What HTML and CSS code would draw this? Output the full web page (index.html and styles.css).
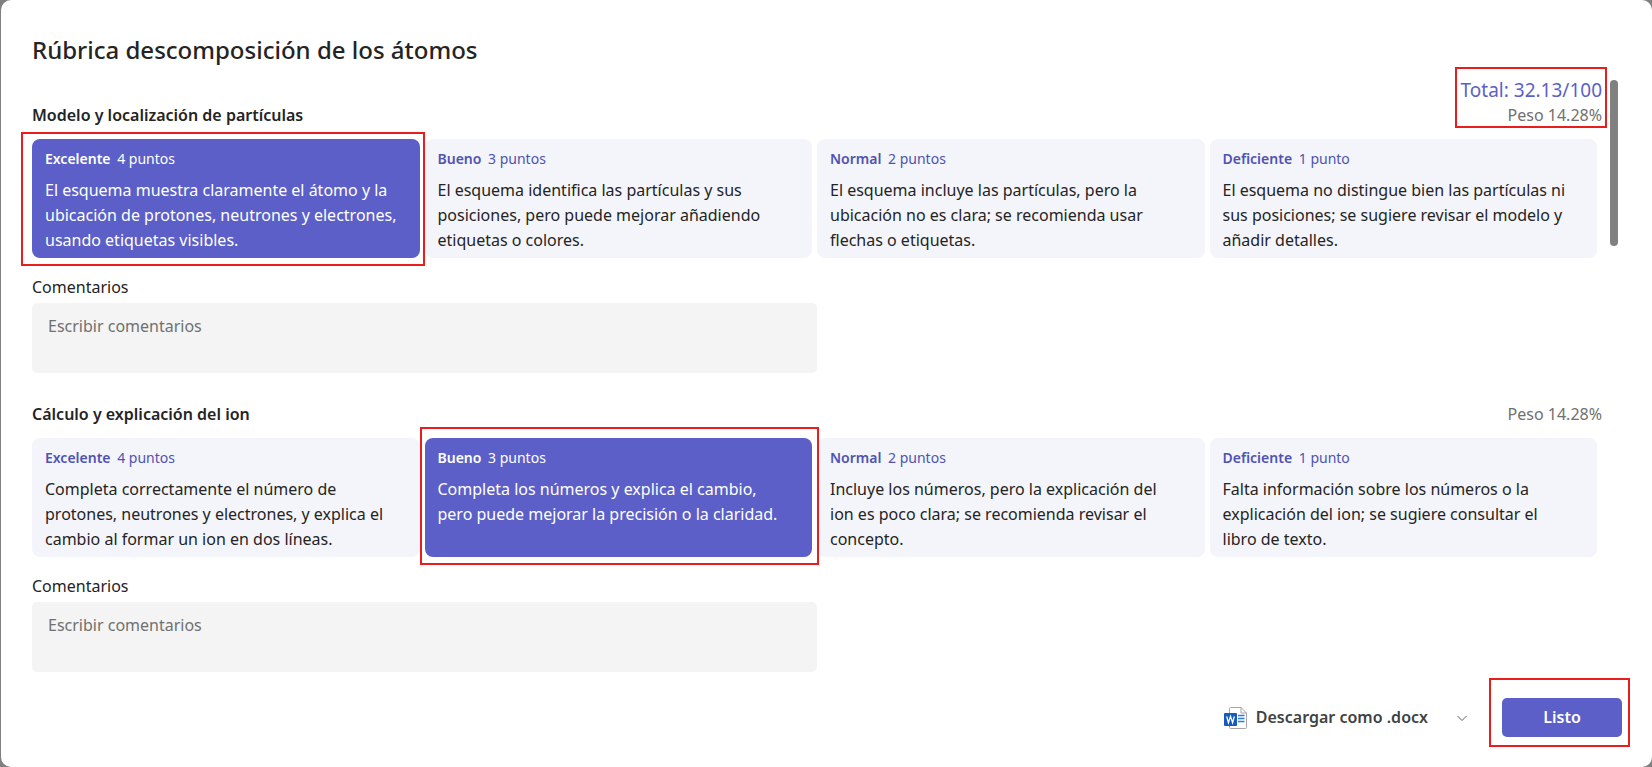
FILE: index.html
```html
<!DOCTYPE html>
<html lang="es">
<head>
  <meta charset="UTF-8">
  <title>Rúbrica descomposición de los átomos</title>
  <link rel="stylesheet" href="styles.css">
</head>
<body>
<div class="dialog">
  <h1>Rúbrica descomposición de los átomos</h1>
  <div class="scroller">
    <div class="rubric">
      <div class="total">Total: 32.13/100</div>

      <section class="criterion">
        <div class="criterion-head">
          <h2>Modelo y localización de partículas</h2>
          <span class="weight">Peso 14.28%</span>
        </div>
        <div class="levels">
          <button type="button" class="level selected" aria-pressed="true">
            <span class="level-name"><b>Excelente</b> 4 puntos</span>
            <span class="level-text">El esquema muestra claramente el átomo y la ubicación de protones, neutrones y electrones, usando etiquetas visibles.</span>
            <span class="mark mark-first"></span>
          </button>
          <button type="button" class="level" aria-pressed="false">
            <span class="level-name"><b>Bueno</b> 3 puntos</span>
            <span class="level-text">El esquema identifica las partículas y sus posiciones, pero puede mejorar añadiendo etiquetas o colores.</span>
          </button>
          <button type="button" class="level" aria-pressed="false">
            <span class="level-name"><b>Normal</b> 2 puntos</span>
            <span class="level-text">El esquema incluye las partículas, pero la ubicación no es clara; se recomienda usar flechas o etiquetas.</span>
          </button>
          <button type="button" class="level" aria-pressed="false">
            <span class="level-name"><b>Deficiente</b> 1 punto</span>
            <span class="level-text">El esquema no distingue bien las partículas ni sus posiciones; se sugiere revisar el modelo y añadir detalles.</span>
          </button>
        </div>
        <label for="comment1">Comentarios</label>
        <textarea id="comment1" class="comment" placeholder="Escribir comentarios"></textarea>
        <span class="mark mark-total"></span>
      </section>

      <section class="criterion">
        <div class="criterion-head">
          <h2>Cálculo y explicación del ion</h2>
          <span class="weight">Peso 14.28%</span>
        </div>
        <div class="levels">
          <button type="button" class="level" aria-pressed="false">
            <span class="level-name"><b>Excelente</b> 4 puntos</span>
            <span class="level-text">Completa correctamente el número de protones, neutrones y electrones, y explica el cambio al formar un ion en dos líneas.</span>
          </button>
          <button type="button" class="level selected" aria-pressed="true">
            <span class="level-name"><b>Bueno</b> 3 puntos</span>
            <span class="level-text">Completa los números y explica el cambio,<br>pero puede mejorar la precisión o la claridad.</span>
            <span class="mark mark-second"></span>
          </button>
          <button type="button" class="level" aria-pressed="false">
            <span class="level-name"><b>Normal</b> 2 puntos</span>
            <span class="level-text">Incluye los números, pero la explicación del<br>ion es poco clara; se recomienda revisar el concepto.</span>
          </button>
          <button type="button" class="level" aria-pressed="false">
            <span class="level-name"><b>Deficiente</b> 1 punto</span>
            <span class="level-text">Falta información sobre los números o la explicación del ion; se sugiere consultar el<br>libro de texto.</span>
          </button>
        </div>
        <label for="comment2">Comentarios</label>
        <textarea id="comment2" class="comment" placeholder="Escribir comentarios"></textarea>
      </section>
    </div>
    <div class="scroll-thumb"></div>
  </div>

  <div class="footer">
    <button type="button" class="download">
      <svg class="word-icon" viewBox="0 0 24 24" width="24" height="24">
        <path d="M6.500 1.500h10.500l5.500 5.500v14.500a1 1 0 0 1-1 1h-15a1 1 0 0 1-1-1v-19a1 1 0 0 1 1-1z" fill="#fff" stroke="#a6a6a6"/>
        <path d="M17 1.500v5.500h5.500" fill="none" stroke="#a6a6a6"/>
        <path d="M14 9.500h6.500M14 12.500h6.500M14 15.500h6.500" stroke="#2b7cd3" stroke-width="1.500"/>
        <rect x="0" y="7" width="13" height="13" rx="1" fill="#185abd"/>
        <path d="M2.700 10.300l1.700 6.400 2.100-6.400 2.100 6.400 1.700-6.400" fill="none" stroke="#fff" stroke-width="1.300"/>
      </svg>
      Descargar como .docx
      <svg class="chevron" viewBox="0 0 12 12" width="12" height="12">
        <path d="M1.500 4l4.500 4.500 4.500-4.500" fill="none" stroke="#616161"/>
      </svg>
    </button>
    <button type="button" class="done">Listo<span class="mark mark-done"></span></button>
  </div>
</div>
</body>
</html>
```

FILE: styles.css
```css
* {
  box-sizing: border-box;
}

body {
  margin: 0;
  background: #808080;
  color: #242424;
  font-family: "Noto Sans", "Open Sans", sans-serif;
  font-size: 16px;
  line-height: 25px;
}

button,
textarea {
  font: inherit;
  border: 0;
}

button {
  cursor: pointer;
}

.dialog {
  display: flex;
  flex-direction: column;
  min-height: 100vh;
  margin-left: 1px;
  padding: 34px 30px 30px 31px;
  border-radius: 10px;
  background: #fff;
}

h1 {
  margin: 0;
  font-size: 24px;
  font-weight: 500;
  line-height: 32px;
}

h2 {
  margin: 0;
  font-size: 16px;
  font-weight: 600;
}

.scroller {
  display: flex;
  gap: 8px;
  padding: 12px 4px 0 0;
}

.rubric {
  flex: 1;
}

.scroll-thumb {
  width: 8px;
  height: 166px;
  margin-top: 2px;
  border-radius: 4px;
  background: #808080;
}

.total {
  color: #5b5fc7;
  font-size: 19px;
  text-align: right;
}

.criterion {
  position: relative;
}

.criterion + .criterion {
  margin: 29px 0 20px;
}

.criterion-head {
  display: flex;
  justify-content: space-between;
}

.weight {
  color: #707070;
}

.levels {
  display: grid;
  grid-template-columns: repeat(4, 1fr);
  gap: 5px;
  margin: 11px 5px 17px 0;
}

.level {
  position: relative;
  display: flex;
  flex-direction: column;
  gap: 9px;
  padding: 10px 12px 5px 13px;
  border-radius: 8px;
  background: #f4f5fa;
  color: #242424;
  text-align: left;
}

.level-name {
  color: #4f52b2;
  font-size: 14px;
  line-height: 20px;
}

.level-name b {
  margin-right: 3px;
  font-weight: 600;
}

.selected {
  background: #5b5fc7;
  color: #fff;
}

.selected .level-name {
  color: #fff;
}

label {
  display: block;
  margin-bottom: 3px;
}

.comment {
  display: block;
  width: 50%;
  height: 70px;
  padding: 11px 16px;
  border-radius: 5px;
  background: #f4f4f4;
  resize: none;
}

.comment::placeholder {
  color: #707070;
}

.footer {
  display: flex;
  justify-content: flex-end;
  align-items: center;
  gap: 34px;
  margin-top: auto;
}

.download {
  display: flex;
  align-items: center;
  gap: 8px;
  padding: 0;
  background: none;
  color: #424242;
  font-weight: 600;
}

.chevron {
  margin-left: 20px;
}

.done {
  position: relative;
  width: 120px;
  height: 39px;
  border-radius: 5px;
  background: #5b5fc7;
  color: #fff;
  font-weight: 600;
}

/* red highlight frames */
.mark {
  position: absolute;
  z-index: 1;
  border: 2px solid #eb1c1c;
  pointer-events: none;
}

.mark-first {
  inset: -7px -5px -8px -11px;
}

.mark-second {
  inset: -11px -7px -8px -5px;
}

.mark-total {
  top: -36px;
  right: -5px;
  width: 152px;
  height: 61px;
}

.mark-done {
  inset: -20px -8px -10px -13px;
}
```
